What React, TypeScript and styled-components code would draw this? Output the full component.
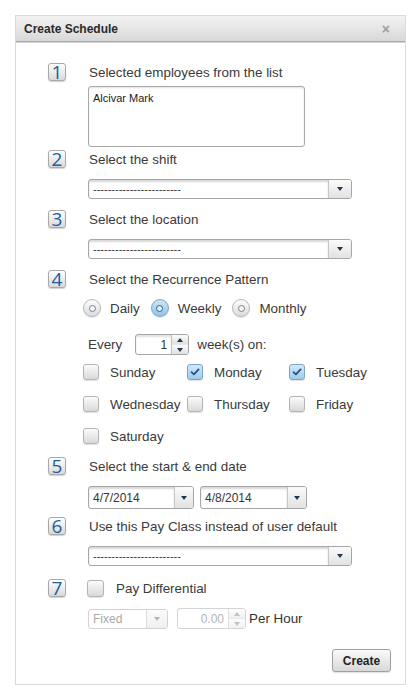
import React from 'react';
import styled, { createGlobalStyle } from 'styled-components';

const Global = createGlobalStyle`
  html, body { margin: 0; padding: 0; background: #fff; }
  body { font-family: "Liberation Sans", Arial, Helvetica, sans-serif; color: #3c3c3c; }
  * { box-sizing: border-box; }
`;

const Page = styled.div`
  padding: 15px 0 0 15px;
`;

const Dialog = styled.div`
  width: 391px;
  height: 670px;
  border: 1px solid #dadada;
  background: #fff;
  display: flex;
  flex-direction: column;
`;

const Header = styled.div`
  height: 26px;
  flex: none;
  display: flex;
  align-items: center;
  justify-content: space-between;
  padding: 0 15px 0 8px;
  background: linear-gradient(#f3f3f3, #d8d8d8);
  border-bottom: 1px solid #a9a9a9;
  box-shadow: 0 1px 0 #d6d6d6;
`;

const Title = styled.div`
  font-size: 12px;
  font-weight: bold;
  color: #2a2a2a;
`;

const Close = styled.span`
  font-size: 14px;
  font-weight: bold;
  color: #9d9d9d;
  line-height: 1;
`;

const Body = styled.div`
  display: flex;
  flex-direction: column;
  padding: 21px 14px 0 32px;
`;

const Step = styled.div<{ $mt?: number }>`
  display: grid;
  grid-template-columns: 18px 1fr;
  column-gap: 22px;
  margin-top: ${(p) => p.$mt ?? 0}px;
`;

const Badge = styled.div`
  width: 18px;
  height: 18px;
  border: 1px solid #a8a8a8;
  border-radius: 3px;
  background: linear-gradient(#ffffff, #d9d9d9);
  box-shadow: 0 1px 1px rgba(0, 0, 0, 0.18);
  color: #1a5f9f;
  font-family: "Open Sans", "DejaVu Sans", sans-serif;
  font-size: 19px;
  line-height: 16px;
  text-align: center;
`;

const Content = styled.div`
  display: flex;
  flex-direction: column;
  align-items: flex-start;
`;

const Label = styled.div`
  font-size: 13.4px;
  line-height: 19px;
  padding-left: 1px;
  color: #3a3a3a;
`;

const ListBox = styled.div`
  margin-top: 4px;
  width: 217px;
  height: 61px;
  border: 1px solid #a9a9a9;
  border-radius: 3px;
  box-shadow: inset 0 1px 2px rgba(0, 0, 0, 0.12);
  padding: 5px 4px;
  font-size: 11px;
  color: #222;
`;

const SelectBox = styled.div<{ $w: number; $h?: number; $mt?: number; $disabled?: boolean }>`
  margin-top: ${(p) => p.$mt ?? 0}px;
  width: ${(p) => p.$w}px;
  height: ${(p) => p.$h ?? 20}px;
  display: flex;
  border: 1px solid ${(p) => (p.$disabled ? '#d2d2d2' : '#a6a6a6')};
  border-radius: 3px;
  background: #fff;
  overflow: hidden;
`;

const SelectValue = styled.div<{ $size?: number; $disabled?: boolean; $inset?: boolean }>`
  flex: 1;
  display: flex;
  align-items: center;
  padding-left: 4px;
  font-size: ${(p) => p.$size ?? 11}px;
  color: ${(p) => (p.$disabled ? '#a9a9a9' : '#3a3333')};
  box-shadow: ${(p) => (p.$inset ? 'inset 0 2px 2px rgba(0,0,0,0.16)' : 'none')};
  white-space: nowrap;
  overflow: hidden;
`;

const SelectButton = styled.div<{ $w: number; $disabled?: boolean }>`
  width: ${(p) => p.$w}px;
  flex: none;
  display: flex;
  align-items: center;
  justify-content: center;
  border-left: 1px solid ${(p) => (p.$disabled ? '#dedede' : '#c6c6c6')};
  background: ${(p) => (p.$disabled ? 'linear-gradient(#fcfcfc, #f0f0f0)' : 'linear-gradient(#fbfbfb, #e2e2e2)')};
`;

const Arrow = styled.span<{ $up?: boolean; $color?: string }>`
  width: 0;
  height: 0;
  border-left: 3.5px solid transparent;
  border-right: 3.5px solid transparent;
  ${(p) =>
    p.$up
      ? `border-bottom: 4px solid ${p.$color ?? '#22384f'};`
      : `border-top: 4px solid ${p.$color ?? '#22384f'};`}
`;

const RadioRow = styled.div`
  margin-top: 10px;
  margin-left: -5px;
  display: flex;
  align-items: center;
  gap: 11px;
`;

const Option = styled.div`
  display: flex;
  align-items: center;
  gap: 9px;
  font-size: 13.4px;
  color: #3a3a3a;
`;

const RadioCircle = styled.span<{ $on?: boolean }>`
  width: 18px;
  height: 18px;
  border-radius: 50%;
  display: flex;
  align-items: center;
  justify-content: center;
  border: 1px solid ${(p) => (p.$on ? '#7ba6c8' : '#b8b8b8')};
  background: ${(p) =>
    p.$on ? 'linear-gradient(#cde5f6, #94c3e6)' : 'linear-gradient(#fdfdfd, #dcdcdc)'};
  box-shadow: 0 1px 1px rgba(0, 0, 0, 0.12);
  &::after {
    content: '';
    width: 5px;
    height: 5px;
    border-radius: 50%;
    border: 1.5px solid ${(p) => (p.$on ? '#2b5f8c' : '#6f8496')};
    background: ${(p) => (p.$on ? '#e8f3fb' : '#f4f4f4')};
  }
`;

const EveryRow = styled.div`
  margin-top: 17px;
  display: flex;
  align-items: center;
  font-size: 13.4px;
  color: #3a3a3a;
`;

const Spinner = styled.div<{ $w: number; $h: number; $disabled?: boolean; $ml?: number; $mr?: number }>`
  width: ${(p) => p.$w}px;
  height: ${(p) => p.$h}px;
  margin-left: ${(p) => p.$ml ?? 0}px;
  margin-right: ${(p) => p.$mr ?? 0}px;
  display: flex;
  border: 1px solid ${(p) => (p.$disabled ? '#d4d4d4' : '#a6a6a6')};
  border-radius: 3px;
  overflow: hidden;
  background: #fff;
`;

const SpinValue = styled.div<{ $disabled?: boolean }>`
  flex: 1;
  display: flex;
  align-items: center;
  justify-content: flex-end;
  padding-right: 4px;
  font-size: 12px;
  color: ${(p) => (p.$disabled ? '#b5b5b5' : '#333')};
  box-shadow: ${(p) => (p.$disabled ? 'none' : 'inset 0 2px 2px rgba(0,0,0,0.12)')};
`;

const SpinButtons = styled.div<{ $disabled?: boolean }>`
  width: 17px;
  flex: none;
  display: flex;
  flex-direction: column;
  border-left: 1px solid ${(p) => (p.$disabled ? '#e0e0e0' : '#c2c2c2')};
`;

const SpinButton = styled.div<{ $disabled?: boolean }>`
  flex: 1;
  display: flex;
  align-items: center;
  justify-content: center;
  background: ${(p) => (p.$disabled ? 'linear-gradient(#fdfdfd, #f1f1f1)' : 'linear-gradient(#fbfbfb, #e0e0e0)')};
  & + & {
    border-top: 1px solid ${(p) => (p.$disabled ? '#e6e6e6' : '#c8c8c8')};
  }
`;

const DayGrid = styled.div`
  margin-top: 9px;
  margin-left: -5px;
  display: grid;
  grid-template-columns: 104px 102px auto;
  row-gap: 16px;
`;

const Check = styled.div<{ $gap?: number }>`
  display: flex;
  align-items: center;
  gap: ${(p) => p.$gap ?? 11}px;
  height: 16px;
  font-size: 13.4px;
  color: #3a3a3a;
  white-space: nowrap;
`;

const Box = styled.span<{ $on?: boolean; $size?: number }>`
  width: ${(p) => p.$size ?? 16}px;
  height: ${(p) => p.$size ?? 16}px;
  flex: none;
  border-radius: 3px;
  display: flex;
  align-items: center;
  justify-content: center;
  border: 1px solid ${(p) => (p.$on ? '#7aa5c7' : '#b4b4b4')};
  background: ${(p) =>
    p.$on ? 'linear-gradient(#d3e8f8, #9fcbeb)' : 'linear-gradient(#fbfbfb, #d9d9d9)'};
  box-shadow: 0 1px 1px rgba(0, 0, 0, 0.12);
`;

const DateRow = styled.div`
  margin-top: 10px;
  display: flex;
  gap: 6px;
`;

const PayRow = styled.div`
  margin-top: 10px;
  display: flex;
  align-items: center;
`;

const PerHour = styled.span`
  margin-left: 3px;
  font-size: 13.4px;
  color: #333;
`;

const Footer = styled.div`
  margin-top: 20px;
  display: flex;
  justify-content: flex-end;
`;

const Button = styled.button`
  width: 59px;
  height: 23px;
  padding: 0;
  border: 1px solid #9f9f9f;
  border-radius: 3px;
  background: linear-gradient(#fbfbfb, #d8d8d8);
  box-shadow: 0 1px 1px rgba(0, 0, 0, 0.12);
  font-family: "Liberation Sans", Arial, sans-serif;
  font-size: 12px;
  font-weight: bold;
  color: #222;
`;

const CheckMark = () => (
  <svg width="10" height="8" viewBox="0 0 10 8">
    <path d="M1.5 4.2 L3.9 6.4 L8.6 1.4" fill="none" stroke="#24557f" strokeWidth="1.8" strokeLinecap="round" strokeLinejoin="round" />
  </svg>
);

const DASHES = '------------------------';

const Dropdown: React.FC<{ w: number; mt?: number }> = ({ w, mt }) => (
  <SelectBox $w={w} $mt={mt}>
    <SelectValue $inset>{DASHES}</SelectValue>
    <SelectButton $w={23}>
      <Arrow />
    </SelectButton>
  </SelectBox>
);

const DateInput: React.FC<{ w: number; value: string }> = ({ w, value }) => (
  <SelectBox $w={w} $h={23}>
    <SelectValue $size={12} $inset>{value}</SelectValue>
    <SelectButton $w={19}>
      <Arrow />
    </SelectButton>
  </SelectBox>
);

const days: { name: string; on?: boolean }[] = [
  { name: 'Sunday' },
  { name: 'Monday', on: true },
  { name: 'Tuesday', on: true },
  { name: 'Wednesday' },
  { name: 'Thursday' },
  { name: 'Friday' },
  { name: 'Saturday' },
];

export default function App() {
  return (
    <Page>
      <Global />
      <Dialog>
        <Header>
          <Title>Create Schedule</Title>
          <Close>×</Close>
        </Header>
        <Body>
          <Step>
            <Badge>1</Badge>
            <Content>
              <Label>Selected employees from the list</Label>
              <ListBox>Alcivar Mark</ListBox>
            </Content>
          </Step>

          <Step $mt={3}>
            <Badge>2</Badge>
            <Content>
              <Label>Select the shift</Label>
              <Dropdown w={264} mt={10} />
            </Content>
          </Step>

          <Step $mt={11}>
            <Badge>3</Badge>
            <Content>
              <Label>Select the location</Label>
              <Dropdown w={264} mt={10} />
            </Content>
          </Step>

          <Step $mt={11}>
            <Badge>4</Badge>
            <Content>
              <Label>Select the Recurrence Pattern</Label>
              <RadioRow>
                <Option>
                  <RadioCircle />
                  Daily
                </Option>
                <Option>
                  <RadioCircle $on />
                  Weekly
                </Option>
                <Option>
                  <RadioCircle />
                  Monthly
                </Option>
              </RadioRow>
              <EveryRow>
                Every
                <Spinner $w={54} $h={21} $ml={13} $mr={8}>
                  <SpinValue>1</SpinValue>
                  <SpinButtons>
                    <SpinButton>
                      <Arrow $up />
                    </SpinButton>
                    <SpinButton>
                      <Arrow />
                    </SpinButton>
                  </SpinButtons>
                </Spinner>
                week(s) on:
              </EveryRow>
              <DayGrid>
                {days.map((d) => (
                  <Check key={d.name}>
                    <Box $on={d.on}>{d.on && <CheckMark />}</Box>
                    {d.name}
                  </Check>
                ))}
              </DayGrid>
            </Content>
          </Step>

          <Step $mt={13}>
            <Badge>5</Badge>
            <Content>
              <Label>Select the start &amp; end date</Label>
              <DateRow>
                <DateInput w={106} value="4/7/2014" />
                <DateInput w={107} value="4/8/2014" />
              </DateRow>
            </Content>
          </Step>

          <Step $mt={8}>
            <Badge>6</Badge>
            <Content>
              <Label>Use this Pay Class instead of user default</Label>
              <Dropdown w={264} mt={10} />
            </Content>
          </Step>

          <Step $mt={13}>
            <Badge>7</Badge>
            <Content>
              <Check $gap={11} style={{ marginLeft: -1, height: 19 }}>
                <Box $size={17} />
                <Label>Pay Differential</Label>
              </Check>
              <PayRow>
                <SelectBox $w={80} $disabled>
                  <SelectValue $size={12} $disabled>Fixed</SelectValue>
                  <SelectButton $w={21} $disabled>
                    <Arrow $color="#a9b6c2" />
                  </SelectButton>
                </SelectBox>
                <Spinner $w={69} $h={21} $ml={9} $disabled>
                  <SpinValue $disabled>0.00</SpinValue>
                  <SpinButtons $disabled>
                    <SpinButton $disabled>
                      <Arrow $up $color="#b9c3cc" />
                    </SpinButton>
                    <SpinButton $disabled>
                      <Arrow $color="#b9c3cc" />
                    </SpinButton>
                  </SpinButtons>
                </Spinner>
                <PerHour>Per Hour</PerHour>
              </PayRow>
            </Content>
          </Step>

          <Footer>
            <Button>Create</Button>
          </Footer>
        </Body>
      </Dialog>
    </Page>
  );
}
